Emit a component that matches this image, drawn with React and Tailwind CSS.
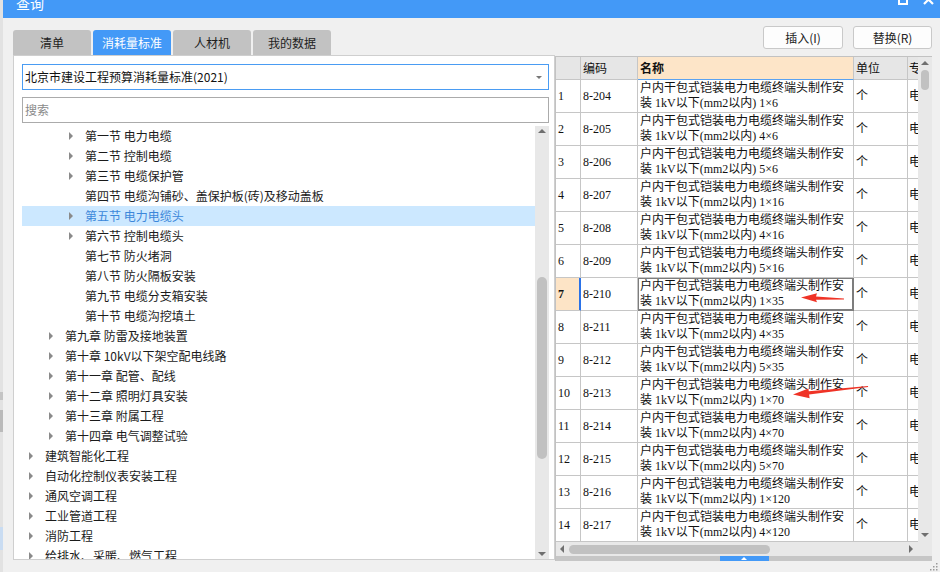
const TABS = ['清单', '消耗量标准', '人材机', '我的数据']

const TREE = [
  { lv: 3, arrow: true, text: '第一节 电力电缆' },
  { lv: 3, arrow: true, text: '第二节 控制电缆' },
  { lv: 3, arrow: true, text: '第三节 电缆保护管' },
  { lv: 3, arrow: false, text: '第四节 电缆沟铺砂、盖保护板(砖)及移动盖板' },
  { lv: 3, arrow: true, text: '第五节 电力电缆头', selected: true },
  { lv: 3, arrow: true, text: '第六节 控制电缆头' },
  { lv: 3, arrow: false, text: '第七节 防火堵洞' },
  { lv: 3, arrow: false, text: '第八节 防火隔板安装' },
  { lv: 3, arrow: false, text: '第九节 电缆分支箱安装' },
  { lv: 3, arrow: false, text: '第十节 电缆沟挖填土' },
  { lv: 2, arrow: true, text: '第九章 防雷及接地装置' },
  { lv: 2, arrow: true, text: '第十章 10kV以下架空配电线路' },
  { lv: 2, arrow: true, text: '第十一章 配管、配线' },
  { lv: 2, arrow: true, text: '第十二章 照明灯具安装' },
  { lv: 2, arrow: true, text: '第十三章 附属工程' },
  { lv: 2, arrow: true, text: '第十四章 电气调整试验' },
  { lv: 1, arrow: true, text: '建筑智能化工程' },
  { lv: 1, arrow: true, text: '自动化控制仪表安装工程' },
  { lv: 1, arrow: true, text: '通风空调工程' },
  { lv: 1, arrow: true, text: '工业管道工程' },
  { lv: 1, arrow: true, text: '消防工程' },
  { lv: 1, arrow: true, text: '给排水、采暖、燃气工程' },
]

const INDENT = { 1: 'pl-[7px]', 2: 'pl-[27px]', 3: 'pl-[47px]' }

const ROWS = [
  ['8-204', '1×6'],
  ['8-205', '4×6'],
  ['8-206', '5×6'],
  ['8-207', '1×16'],
  ['8-208', '4×16'],
  ['8-209', '5×16'],
  ['8-210', '1×35'],
  ['8-211', '4×35'],
  ['8-212', '5×35'],
  ['8-213', '1×70'],
  ['8-214', '4×70'],
  ['8-215', '5×70'],
  ['8-216', '1×120'],
  ['8-217', '4×120'],
]

const ArrowUp = () => (
  <span className="h-0 w-0 border-x-[4px] border-b-[4px] border-x-transparent border-b-[#6f6f6f]" />
)
const ArrowDown = () => (
  <span className="h-0 w-0 border-x-[4px] border-t-[4px] border-x-transparent border-t-[#6f6f6f]" />
)

function TreeRow({ item }) {
  return (
    <div
      className={`flex h-[20px] shrink-0 items-center whitespace-nowrap ${INDENT[item.lv]} ${
        item.selected ? 'bg-[#cce8ff] text-[#3b87da]' : 'text-[#1b1b1b]'
      }`}
    >
      <span className="flex w-[16px] shrink-0 items-center">
        {item.arrow && (
          <span className="h-0 w-0 border-y-[4px] border-l-[4px] border-y-transparent border-l-[#8a8a8a]" />
        )}
      </span>
      <span className="leading-[20px]">{item.text}</span>
    </div>
  )
}

function LeftPane() {
  return (
    <div className="mt-[12px] flex w-[542px] shrink-0 flex-col">
      <div className="flex h-[25px] gap-[2px]">
        {TABS.map((t, i) => (
          <div
            key={t}
            className={`flex w-[78px] items-center justify-center rounded-t-[3px] text-[12px] ${
              i === 1 ? 'bg-[#4399f7] text-white' : 'bg-[#c2c2c2] text-[#1e1e1e]'
            }`}
          >
            {t}
          </div>
        ))}
      </div>
      <div className="flex h-[505px] flex-col border border-[#cfcfcf] bg-white pl-[8px] pr-[5px] pt-[8px]">
        <div className="flex h-[26px] shrink-0 items-center justify-between border border-[#4a9cf3] pl-[2px] pr-[6px] text-[#111]">
          <span>北京市建设工程预算消耗量标准(2021)</span>
          <span className="h-0 w-0 border-x-[3px] border-t-[3px] border-x-transparent border-t-[#777]" />
        </div>
        <div className="mt-[7px] flex h-[26px] shrink-0 items-center border border-[#ababab] pl-[2px] text-[#8a8a8a]">
          搜索
        </div>
        <div className="mt-[3px] flex min-h-0 flex-1">
          <div className="flex min-w-0 flex-1 flex-col overflow-hidden">
            {TREE.map((item) => (
              <TreeRow key={item.text} item={item} />
            ))}
          </div>
          <div className="flex w-[14px] shrink-0 flex-col items-center bg-[#e8e8e8] pb-[3px] pt-[3px]">
            <ArrowUp />
            <div className="mt-[144px] h-[182px] w-[10px] rounded-full bg-[#c1c1c1]" />
            <div className="flex-1" />
            <ArrowDown />
          </div>
        </div>
      </div>
    </div>
  )
}

function TableRow({ n, code, size }) {
  const active = n === 7
  return (
    <div className="flex h-[33px] shrink-0">
      <div
        className={`flex w-[25px] shrink-0 items-center border-b border-r pl-[2px] ${
          active
            ? 'border-b-[#c6c6c6] border-r-[#2a72e8] bg-[#fde4c6] font-bold shadow-[inset_-1px_0_0_#2a72e8]'
            : 'border-[#c6c6c6]'
        }`}
      >
        {n}
      </div>
      <div className="flex w-[57px] shrink-0 items-center border-b border-r border-[#c6c6c6] pl-[2px]">{code}</div>
      <div
        className={`flex w-[216px] shrink-0 flex-col justify-center whitespace-nowrap border-b border-r pl-[2px] leading-[15px] ${
          active ? 'border-[#7d7d7d] shadow-[inset_0_0_0_1px_#7d7d7d]' : 'border-[#c6c6c6]'
        }`}
      >
        <span>户内干包式铠装电力电缆终端头制作安</span>
        <span>装 1kV以下(mm2以内) {size}</span>
      </div>
      <div className="flex w-[54px] shrink-0 items-center border-b border-r border-[#c6c6c6] pl-[2px]">个</div>
      <div className="flex w-[60px] shrink-0 items-center border-b border-[#c6c6c6] pl-[1px]">电</div>
    </div>
  )
}

function RightPane() {
  return (
    <div className="flex w-[377px] shrink-0 flex-col">
      <div className="mt-[8px] flex h-[23px] justify-end gap-[10px]">
        <button className="w-[80px] rounded-[3px] border border-[#c9c9c9] bg-[#fdfdfd] text-[12px] text-[#222]">
          插入(I)
        </button>
        <button className="w-[79px] rounded-[3px] border border-[#c9c9c9] bg-[#fdfdfd] text-[12px] text-[#222]">
          替换(R)
        </button>
      </div>
      <div className="mt-[7px] flex h-[505px] flex-col border-l border-t border-[#c2c2c2]">
        <div className="flex min-h-0 flex-1">
          <div className="flex min-w-0 flex-1 flex-col overflow-hidden bg-white font-['Liberation_Serif','Noto_Sans_CJK_SC',serif] text-[12px] text-[#111]">
            <div className="flex h-[23px] shrink-0 font-['Noto_Sans_CJK_SC',sans-serif]">
              <div className="w-[25px] shrink-0 border-b border-r border-[#c6c6c6] bg-[#e6e6e6]" />
              <div className="flex w-[57px] shrink-0 items-center border-b border-r border-[#c6c6c6] bg-[#e6e6e6] pl-[2px]">
                编码
              </div>
              <div className="flex w-[216px] shrink-0 items-center border-b border-r border-b-[#5aa2f0] border-r-[#c6c6c6] bg-[#fde5c8] pl-[2px] font-bold">
                名称
              </div>
              <div className="flex w-[54px] shrink-0 items-center border-b border-r border-[#c6c6c6] bg-[#e6e6e6] pl-[2px]">
                单位
              </div>
              <div className="flex w-[60px] shrink-0 items-center border-b border-[#c6c6c6] bg-[#e6e6e6] pl-[1px]">
                专业
              </div>
            </div>
            {ROWS.map(([code, size], i) => (
              <TableRow key={code} n={i + 1} code={code} size={size} />
            ))}
          </div>
          <div className="flex w-[14px] shrink-0 flex-col items-center bg-[#e8e8e8] pb-[5px] pt-[4px]">
            <ArrowUp />
            <div className="mt-[5px] h-[20px] w-[8px] rounded-full bg-[#c1c1c1]" />
            <div className="flex-1" />
            <ArrowDown />
          </div>
        </div>
        <div className="flex h-[14px] shrink-0 items-center bg-[#e8e8e8] pl-[4px] pr-[19px]">
          <span className="h-0 w-0 border-y-[4px] border-r-[4px] border-y-transparent border-r-[#6f6f6f]" />
          <div className="ml-[5px] h-[9px] w-[201px] rounded-full bg-[#c1c1c1]" />
          <div className="flex-1" />
          <span className="h-0 w-0 border-y-[4px] border-l-[4px] border-y-transparent border-l-[#6f6f6f]" />
        </div>
        <div className="flex h-[5px] shrink-0 justify-center bg-[#c6c6c6]">
          <div className="flex w-[49px] items-start justify-center bg-[#4399f7] pt-[1px]">
            <span className="h-0 w-0 border-x-[3px] border-b-[3px] border-x-transparent border-b-white" />
          </div>
        </div>
      </div>
    </div>
  )
}

export default function App() {
  return (
    <div className="relative flex h-[572px] w-[940px] overflow-hidden bg-[#f0f0f0] font-['Noto_Sans_CJK_SC',sans-serif] text-[12px]">
      <div className="flex w-[3px] shrink-0 flex-col bg-[#e2e2e2]">
        <div className="mt-[392px] h-[8px] bg-[#c4c4c4]" />
        <div className="mt-[10px] h-[22px] bg-[#bababa]" />
        <div className="mt-[95px] h-[23px] bg-[#c9dcf2]" />
      </div>
      <div className="flex min-w-0 flex-1 flex-col">
        <div className="flex h-[18px] shrink-0 items-start overflow-hidden bg-[#4399f7] text-white">
          <span className="-mt-[4px] pl-[13px] text-[14px] leading-[14px]">查询</span>
          <div className="ml-auto flex items-start gap-[15px] pr-[6px]">
            <div className="-mt-[6px] h-[11px] w-[10px] border-2 border-white" />
            <svg width="11" height="11" viewBox="0 0 11 11" className="-mt-[6px]">
              <path d="M1 1 L10 10 M10 1 L1 10" stroke="white" strokeWidth="2.2" />
            </svg>
          </div>
        </div>
        <div className="flex min-h-0 flex-1 pl-[10px] pr-[8px]">
          <LeftPane />
          <RightPane />
        </div>
      </div>

      <svg className="pointer-events-none absolute left-0 top-0" width="940" height="572" viewBox="0 0 940 572">
        <polygon
          points="801,297.5 817,293.3 816,296.4 844,298.4 844,299.5 816,299.8 817,302.2"
          fill="#ef3326"
        />
        <polygon
          points="793,394.5 808.4,388.6 808.8,391.3 868,385.9 868.1,387.1 809.1,394.6 809.6,398.3"
          fill="#ef3326"
        />
      </svg>

      <svg className="pointer-events-none absolute bottom-[1px] right-[2px]" width="9" height="9" viewBox="0 0 9 9">
        <rect x="7" y="1" width="1.5" height="1.5" fill="#9a9a9a" />
        <rect x="4" y="4" width="1.5" height="1.5" fill="#9a9a9a" />
        <rect x="7" y="4" width="1.5" height="1.5" fill="#9a9a9a" />
        <rect x="1" y="7" width="1.5" height="1.5" fill="#9a9a9a" />
        <rect x="4" y="7" width="1.5" height="1.5" fill="#9a9a9a" />
        <rect x="7" y="7" width="1.5" height="1.5" fill="#9a9a9a" />
      </svg>
    </div>
  )
}
